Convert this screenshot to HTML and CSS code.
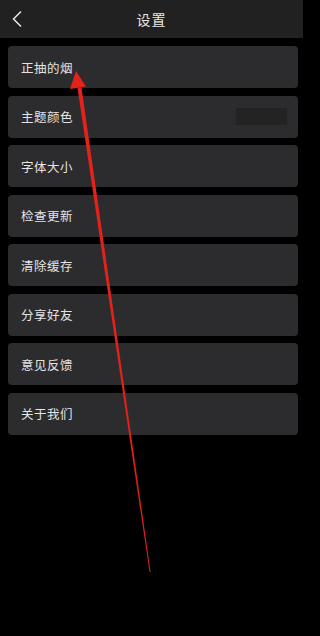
FILE: index.html
```html
<!DOCTYPE html>
<html lang="zh">
<head>
<meta charset="utf-8">
<link rel="stylesheet" href="styles.css">
</head>
<body>
<div class="page">
  <header class="topbar">
    <svg class="back" width="12" height="18" viewBox="0 0 12 18"><path d="M10 1.5 L2.5 9 L10 16.5" fill="none" stroke="#e8e8e8" stroke-width="1.5"/></svg>
    <div class="title">设置</div>
  </header>
  <ul class="list">
    <li class="item">正抽的烟</li>
    <li class="item">主题颜色<span class="swatch"></span></li>
    <li class="item">字体大小</li>
    <li class="item">检查更新</li>
    <li class="item">清除缓存</li>
    <li class="item">分享好友</li>
    <li class="item">意见反馈</li>
    <li class="item">关于我们</li>
  </ul>
  <svg class="annot" width="303" height="636" viewBox="0 0 303 636">
    <polygon points="77.5,88 81.5,87.5 150.6,572 149.6,572" fill="#e2221b"/>
    <polygon points="76,71 70,89 86,86.5" fill="#e2221b"/>
  </svg>
</div>
</body>
</html>
```
FILE: styles.css
```css
html, body {
  margin: 0;
  padding: 0;
  background: #000;
}
.page {
  position: relative;
  width: 303px;
  height: 636px;
  overflow: hidden;
  background: #000;
  font-family: "Noto Sans CJK SC", "Noto Sans", sans-serif;
}
.topbar {
  height: 38px;
  background: #212121;
  display: flex;
  align-items: center;
  justify-content: center;
  position: relative;
}
.back {
  position: absolute;
  left: 11px;
  top: 10px;
}
.title {
  color: #e6e6e6;
  font-size: 14px;
  letter-spacing: 1px;
}
.list {
  list-style: none;
  margin: 0;
  padding: 8px 5px 0 8px;
  display: flex;
  flex-direction: column;
  gap: 7.5px;
}
.item {
  height: 42px;
  background: #2c2c2e;
  border-radius: 4px;
  display: flex;
  align-items: center;
  justify-content: space-between;
  padding: 0 11px 0 13px;
  color: #e4e4e4;
  font-size: 12.5px;
  letter-spacing: 0.5px;
}
.swatch {
  width: 51px;
  height: 17px;
  background: #232324;
}
.annot {
  position: absolute;
  left: 0;
  top: 0;
  pointer-events: none;
}
```
